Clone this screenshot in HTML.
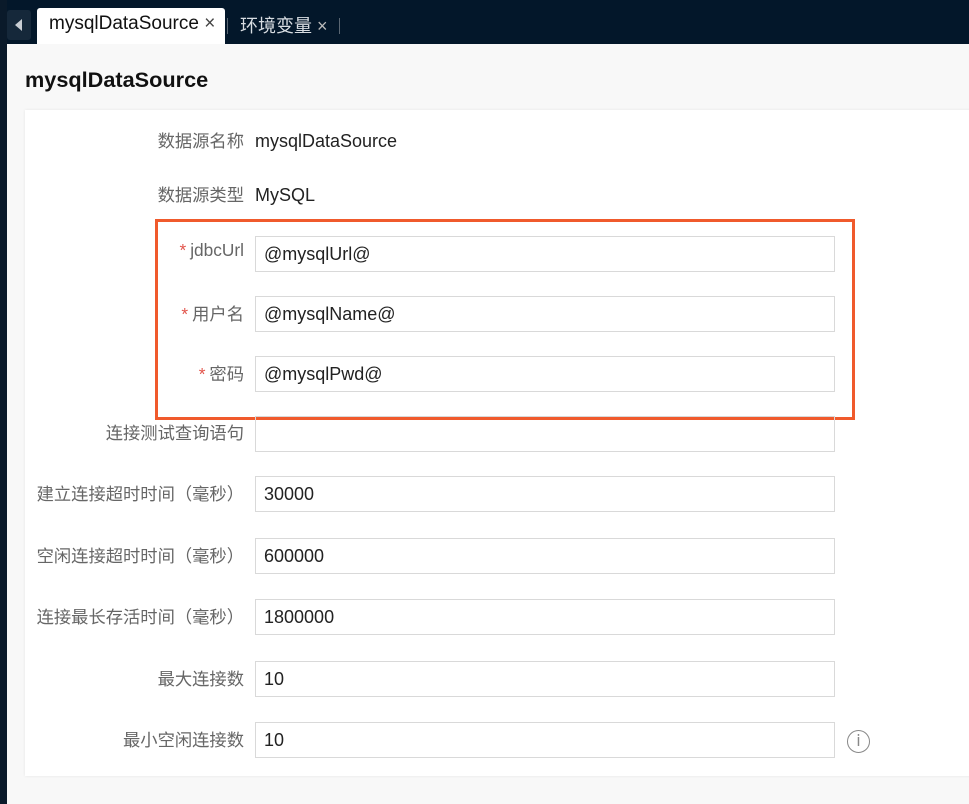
<!DOCTYPE html>
<html><head><meta charset="utf-8"><style>
*{margin:0;padding:0;box-sizing:border-box}
body{width:969px;height:804px;background:#f8f8f8;font-family:"Liberation Sans","Noto Sans CJK SC",sans-serif;position:relative;overflow:hidden}
.top{position:absolute;left:0;top:0;width:969px;height:44px;background:#03172a}
.left{position:absolute;left:0;top:0;width:7px;height:804px;background:#0a1a2a}
.arrow{position:absolute;left:7px;top:10px;width:24px;height:30px;background:#15283a;border-radius:3px}
.arrow:after{content:"";position:absolute;left:8px;top:9px;border-right:7px solid #c8cdd3;border-top:6px solid transparent;border-bottom:6px solid transparent}
.tab1{position:absolute;left:37px;top:8px;width:188px;height:36px;background:#fff;border-radius:3px 3px 0 0;font-size:19px;color:#111;padding:5px 0 0 12px;white-space:nowrap}
.tab2{position:absolute;left:240px;top:12px;font-size:18px;color:#d8dde2}
.sep{position:absolute;top:18px;width:1px;height:16px;background:#5a6672}
h1{position:absolute;left:25px;top:67px;font-size:21.7px;font-weight:bold;color:#111}
.card{position:absolute;left:25px;top:110px;width:960px;height:666px;background:#fff;box-shadow:0 0 3px rgba(0,0,0,.08)}
.lab{position:absolute;right:725px;font-size:17.3px;color:#666;white-space:nowrap;margin-top:-3px}
.lab i{color:#e2564d;font-style:normal;margin-right:4px}
.val{position:absolute;left:255px;font-size:18px;color:#222}
.inp{position:absolute;left:255px;width:580px;height:36px;border:1px solid #d9d9d9;font-size:18px;color:#222;padding:7px 0 0 8px}
.red{position:absolute;left:155px;top:219px;width:700px;height:201px;border:3px solid #f05a2c}
.info{position:absolute;left:847px;top:730px;width:23px;height:23px;border:1.5px solid #888;border-radius:50%;color:#888;font-size:16px;text-align:center;line-height:20px;font-family:"DejaVu Sans",sans-serif}
</style></head><body>
<div class="top"></div><div class="left"></div><div class="arrow"></div>
<div class="tab1">mysqlDataSource <span style="color:#444">×</span></div>
<div class="sep" style="left:227px"></div>
<div class="tab2">环境变量 <span style="color:#bbb">×</span></div>
<div class="sep" style="left:339px"></div>
<h1>mysqlDataSource</h1>
<div class="card"></div>
<div class="lab" style="top:130px">数据源名称</div><div class="val" style="top:131px">mysqlDataSource</div>
<div class="lab" style="top:184px">数据源类型</div><div class="val" style="top:185px">MySQL</div>
<div class="lab" style="top:243px"><i>*</i>jdbcUrl</div><div class="inp" style="top:236px">@mysqlUrl@</div>
<div class="lab" style="top:303px"><i>*</i>用户名</div><div class="inp" style="top:296px">@mysqlName@</div>
<div class="lab" style="top:363px"><i>*</i>密码</div><div class="inp" style="top:356px">@mysqlPwd@</div>
<div class="red"></div>
<div class="lab" style="top:422px">连接测试查询语句</div><div class="inp" style="top:416px"></div>
<div class="lab" style="top:483px">建立连接超时时间（毫秒）</div><div class="inp" style="top:476px">30000</div>
<div class="lab" style="top:545px">空闲连接超时时间（毫秒）</div><div class="inp" style="top:538px">600000</div>
<div class="lab" style="top:606px">连接最长存活时间（毫秒）</div><div class="inp" style="top:599px">1800000</div>
<div class="lab" style="top:668px">最大连接数</div><div class="inp" style="top:661px">10</div>
<div class="lab" style="top:729px">最小空闲连接数</div><div class="inp" style="top:722px">10</div>
<div class="info">i</div>
</body></html>
